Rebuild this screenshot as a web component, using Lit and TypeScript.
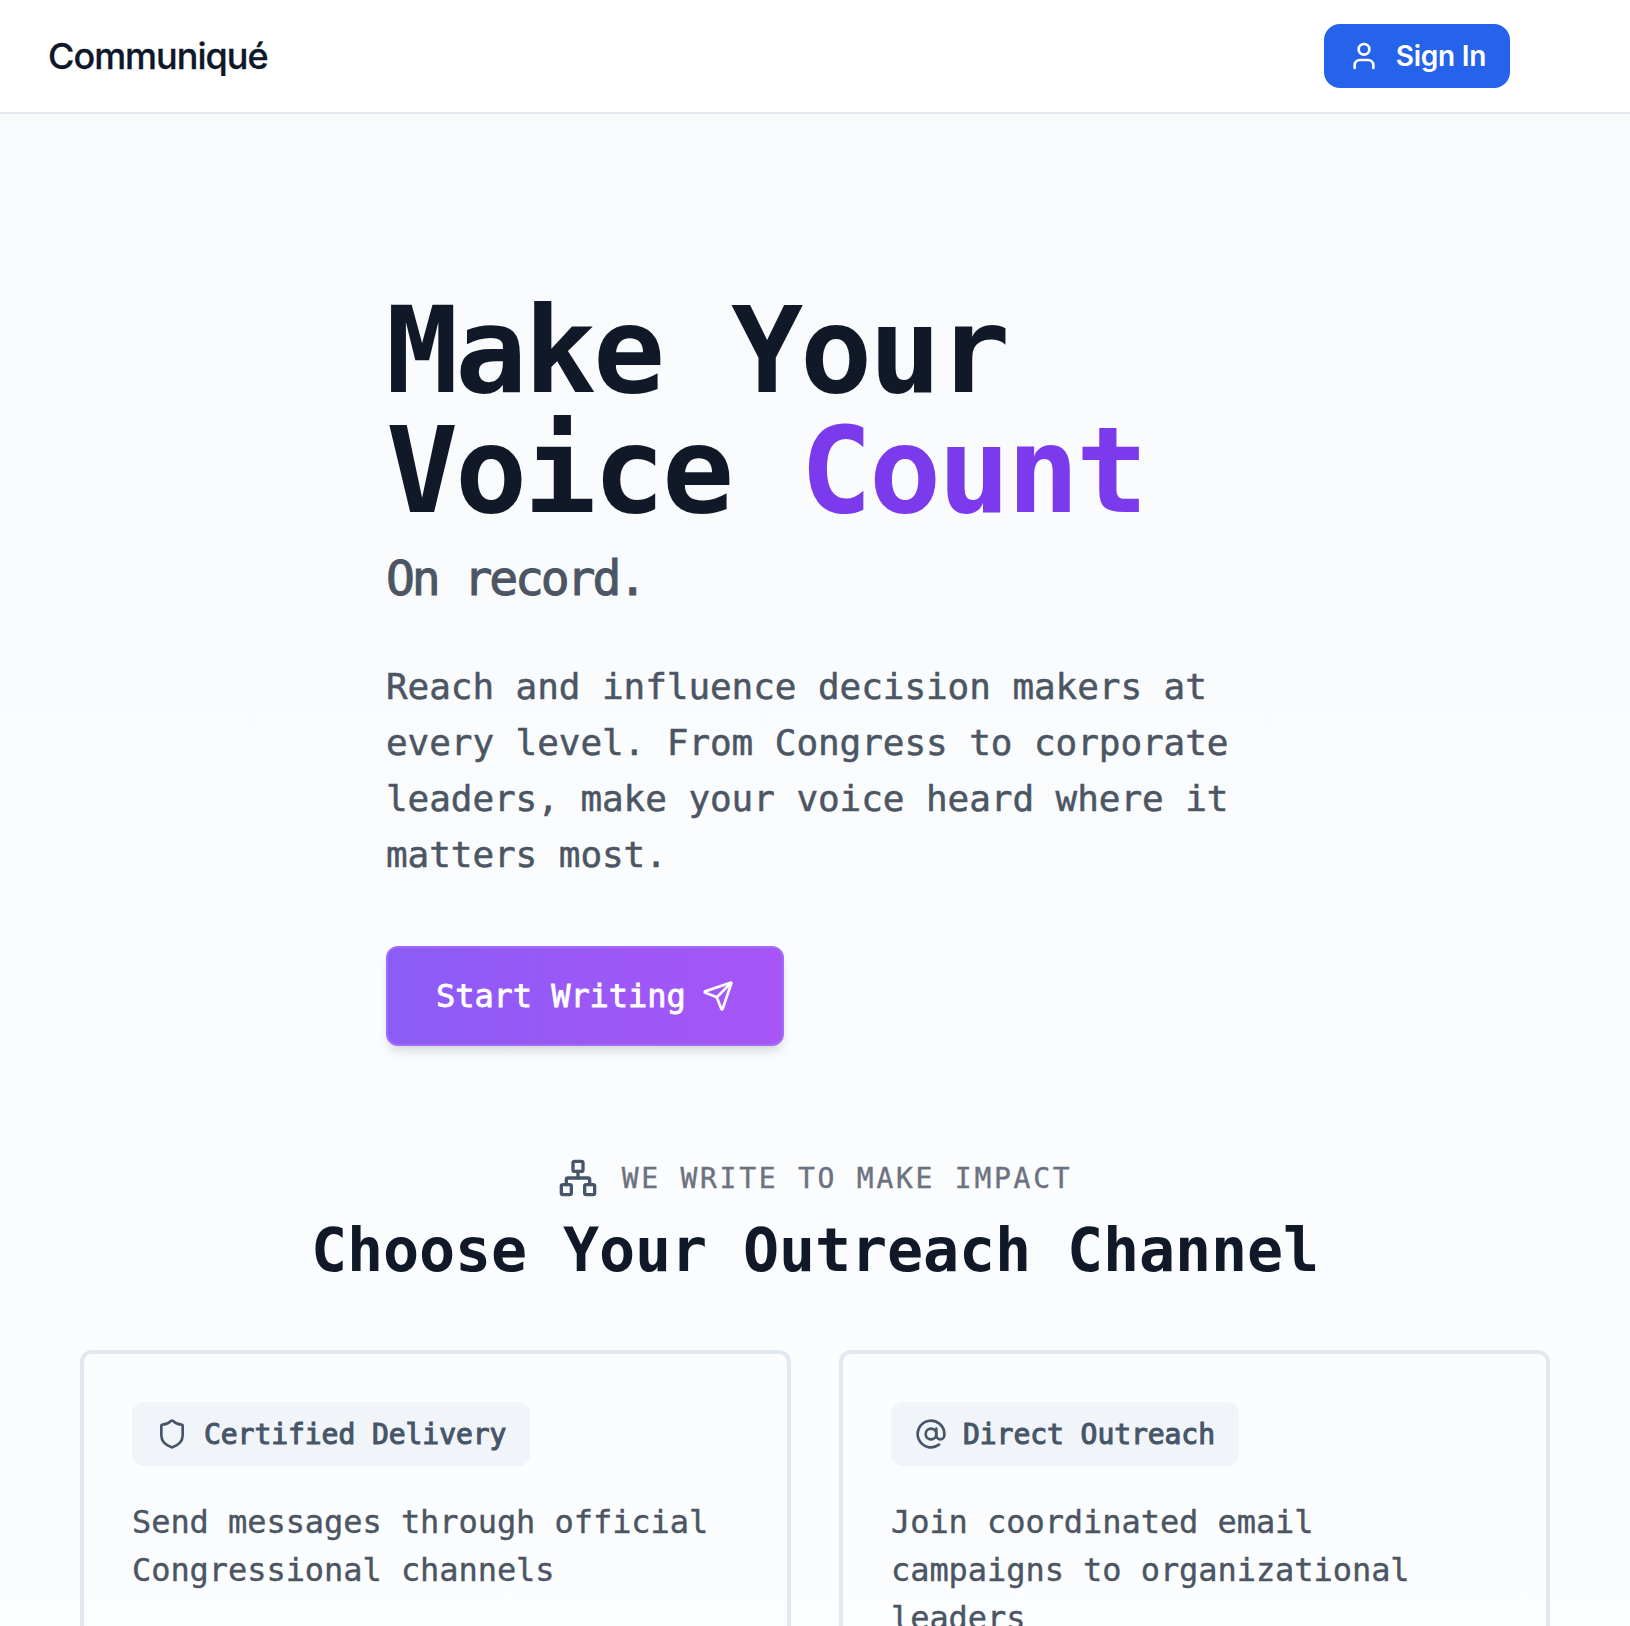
import { LitElement, html, svg, css, type SVGTemplateResult } from "lit";
import { customElement, property } from "lit/decorators.js";

const ICONS: Record<string, SVGTemplateResult> = {
  user: svg`<path d="M19 21v-2a4 4 0 0 0-4-4H9a4 4 0 0 0-4 4v2"/><circle cx="12" cy="7" r="4"/>`,
  send: svg`<path d="M14.536 21.686a.5.5 0 0 0 .937-.024l6.5-19a.496.496 0 0 0-.635-.635l-19 6.5a.5.5 0 0 0-.024.937l7.93 3.18a2 2 0 0 1 1.112 1.11z"/><path d="m21.854 2.147-10.94 10.939"/>`,
  network: svg`<rect x="16" y="16" width="6" height="6" rx="1"/><rect x="2" y="16" width="6" height="6" rx="1"/><rect x="9" y="2" width="6" height="6" rx="1"/><path d="M5 16v-3a1 1 0 0 1 1-1h12a1 1 0 0 1 1 1v3"/><path d="M12 12V8"/>`,
  shield: svg`<path d="M20 13c0 5-3.5 7.5-7.66 8.95a1 1 0 0 1-.67-.01C7.5 20.5 4 18 4 13V6a1 1 0 0 1 1-1c2 0 4.5-1.2 6.24-2.72a1.17 1.17 0 0 1 1.52 0C14.51 3.81 17 5 19 5a1 1 0 0 1 1 1z"/>`,
  at: svg`<circle cx="12" cy="12" r="4"/><path d="M16 8v5a3 3 0 0 0 6 0v-1a10 10 0 1 0-4 8"/>`,
};

@customElement("line-icon")
class LineIcon extends LitElement {
  @property() name = "user";
  static styles = css`
    :host { display: block; width: 32px; height: 32px; flex: none; }
    .glyph { display: block; width: 100%; height: 100%; }
  `;
  render() {
    return html`<svg class="glyph" viewBox="0 0 24 24" fill="none" stroke="currentColor" stroke-width="2" stroke-linecap="round" stroke-linejoin="round">${ICONS[this.name]}</svg>`;
  }
}

@customElement("channel-card")
class ChannelCard extends LitElement {
  @property() icon = "shield";
  @property() label = "";
  @property() text = "";
  static styles = css`
    :host {
      display: block;
      box-sizing: border-box;
      height: 480px;
      padding: 48px;
      border: 4px solid #e2e8f0;
      border-radius: 12px;
    }
    .tag {
      display: inline-flex;
      align-items: center;
      gap: 16px;
      height: 64px;
      box-sizing: border-box;
      padding: 0 24px;
      border-radius: 12px;
      background: #f1f5f9;
      color: #475569;
      font-size: 28px;
      line-height: 40px;
      -webkit-text-stroke: 1.1px currentColor;
      white-space: nowrap;
      vertical-align: top;
    }
    .label { padding-top: 2px; }
    .desc {
      margin: 32px 0 0;
      color: #4b5563;
      font-size: 32px;
      line-height: 48px;
      -webkit-text-stroke: 0.4px currentColor;
    }
  `;
  render() {
    return html`
      <div class="tag"><line-icon name=${this.icon}></line-icon><span class="label">${this.label}</span></div>
      <p class="desc">${this.text}</p>
    `;
  }
}

@customElement("app-root")
class AppRoot extends LitElement {
  static styles = css`
    :host {
      display: flex;
      flex-direction: column;
      height: 1626px;
      overflow: hidden;
      background: #fff;
      font-family: "DejaVu Sans Mono", "Liberation Mono", monospace;
      font-variant-ligatures: none;
    }
    .header {
      flex: none;
      box-sizing: border-box;
      height: 114px;
      display: flex;
      align-items: center;
      justify-content: space-between;
      padding: 0 120px 0 48px;
      border-bottom: 2px solid #e2e8f0;
      background: #fff;
      font-family: Inter, "Liberation Sans", sans-serif;
    }
    .brand {
      color: #0f172a;
      font-size: 36px;
      line-height: 56px;
      font-weight: 500;
      letter-spacing: -1px;
      -webkit-text-stroke: 0.3px currentColor;
    }
    .signin {
      display: flex;
      align-items: center;
      gap: 16px;
      height: 64px;
      padding: 0 24px;
      border: 0;
      border-radius: 16px;
      background: #2563eb;
      color: #fff;
      font: 600 28px/40px Inter, "Liberation Sans", sans-serif;
    }
    .signin span { letter-spacing: -0.27px; }
    .main {
      flex: 1;
      min-height: 0;
      background: linear-gradient(to bottom, #f8fafc, #fcfdfe);
      display: flex;
      flex-direction: column;
    }
    .hero {
      flex: none;
      width: 858px;
      margin: 177px auto 0;
    }
    .headline {
      margin: 0;
      color: #111827;
      font-size: 120px;
      line-height: 120px;
      font-weight: 700;
      letter-spacing: -3.25px;
    }
    .accent { color: #7c3aed; }
    .record {
      margin: 15px 0 0;
      color: #4b5563;
      font-size: 48px;
      line-height: 64px;
      letter-spacing: -3.1px;
      -webkit-text-stroke: 1px currentColor;
    }
    .lede {
      margin: 49px 0 0;
      color: #4b5563;
      font-size: 36px;
      line-height: 56px;
      letter-spacing: -0.074px;
      -webkit-text-stroke: 0.5px currentColor;
    }
    .cta {
      display: inline-flex;
      align-items: center;
      gap: 16px;
      box-sizing: border-box;
      height: 100px;
      margin-top: 63px;
      padding: 0 48px;
      border: 2px solid #a26bfa;
      border-radius: 12px;
      background: linear-gradient(to right, #8b5cf6, #a855f7) border-box;
      color: #fff;
      font: 400 32px/48px "DejaVu Sans Mono", "Liberation Mono", monospace;
      letter-spacing: -0.066px;
      -webkit-text-stroke: 0.8px currentColor;
      box-shadow: 0 8px 12px -2px rgba(0, 0, 0, 0.1), 0 4px 8px -4px rgba(0, 0, 0, 0.1);
      vertical-align: top;
    }
    .intro {
      flex: none;
      display: flex;
      flex-direction: column;
      align-items: center;
      margin-top: 112px;
    }
    .eyebrow {
      display: flex;
      align-items: center;
      gap: 24px;
      height: 40px;
      color: #6b7280;
      font-size: 28px;
      line-height: 40px;
      letter-spacing: 2.74px;
      white-space: nowrap;
      -webkit-text-stroke: 0.4px currentColor;
    }
    .eyebrow span { padding-top: 2px; }
    .eyebrow line-icon { width: 40px; height: 40px; color: #475569; }
    .title {
      margin: 16px 0 0;
      color: #111827;
      font-size: 60px;
      line-height: 72px;
      font-weight: 700;
      letter-spacing: -0.123px;
      white-space: nowrap;
    }
    .cards {
      flex: none;
      display: grid;
      grid-template-columns: 1fr 1fr;
      gap: 48px;
      margin: 64px 80px 0;
      letter-spacing: -0.06px;
    }
  `;
  render() {
    return html`
      <header class="header">
        <div class="brand">Communiqué</div>
        <button class="signin"><line-icon name="user"></line-icon><span>Sign In</span></button>
      </header>
      <main class="main">
        <section class="hero">
          <h1 class="headline">Make Your<br>Voice <span class="accent">Count</span></h1>
          <div class="record">On record.</div>
          <p class="lede">Reach and influence decision makers at every level. From Congress to corporate leaders, make your voice heard where it matters most.</p>
          <button class="cta"><span>Start Writing</span><line-icon name="send"></line-icon></button>
        </section>
        <section class="intro">
          <div class="eyebrow"><line-icon name="network"></line-icon><span>WE WRITE TO MAKE IMPACT</span></div>
          <h2 class="title">Choose Your Outreach Channel</h2>
        </section>
        <section class="cards">
          <channel-card icon="shield" label="Certified Delivery" text="Send messages through official Congressional channels"></channel-card>
          <channel-card icon="at" label="Direct Outreach" text="Join coordinated email campaigns to organizational leaders"></channel-card>
        </section>
      </main>
    `;
  }
}
